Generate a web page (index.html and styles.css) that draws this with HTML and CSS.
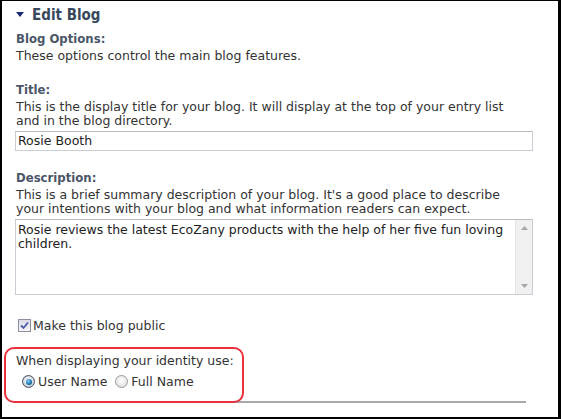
FILE: index.html
```html
<!DOCTYPE html>
<html>
<head>
<meta charset="utf-8">
<link rel="stylesheet" href="styles.css">
</head>
<body>
<div class="frame">
  <h2 class="heading"><span class="tri"></span>Edit Blog</h2>
  <div class="field first">
    <div class="label">Blog Options:</div>
    <div class="help">These options control the main blog features.</div>
  </div>
  <div class="field">
    <div class="label">Title:</div>
    <div class="help">This is the display title for your blog. It will display at the top of your entry list and in the blog directory.</div>
    <div class="input">Rosie Booth</div>
  </div>
  <div class="field">
    <div class="label">Description:</div>
    <div class="help">This is a brief summary description of your blog. It's a good place to describe your intentions with your blog and what information readers can expect.</div>
    <div class="textarea">
      <div class="ta-text">Rosie reviews the latest EcoZany products with the help of her five fun loving children.</div>
      <div class="scroll">
        <svg width="7" height="4" viewBox="0 0 7 4"><path d="M0 4 L3.5 0 L7 4Z" fill="#a8a8a8"/></svg>
        <svg width="7" height="4" viewBox="0 0 7 4"><path d="M0 0 L3.5 4 L7 0Z" fill="#a8a8a8"/></svg>
      </div>
    </div>
  </div>
  <label class="check"><span class="box"><svg width="9" height="9" viewBox="0 0 9 9"><path d="M1 4.5 L3.5 7 L8 1.5" fill="none" stroke="#4a5aa8" stroke-width="1.8"/></svg></span>Make this blog public</label>
  <div class="identity">
    <div class="id-label">When displaying your identity use:</div>
    <div class="radios">
      <span class="radio on"></span><span class="rlabel">User Name</span>
      <span class="radio"></span><span class="rlabel">Full Name</span>
    </div>
  </div>
  <div class="rule"></div>
</div>
</body>
</html>
```
FILE: styles.css
```css
* { box-sizing: border-box; }
html, body { margin: 0; padding: 0; background: #fff; }
.frame {
  width: 561px;
  height: 419px;
  border-style: solid;
  border-color: #000;
  border-width: 1px 3px 2px 2px;
  padding: 1px 0 0 14px;
  font-family: "DejaVu Sans", Verdana, sans-serif;
  font-size: 12.5px;
  color: #333;
  overflow: hidden;
}
.heading {
  margin: 0;
  height: 25px;
  display: flex;
  align-items: center;
  font-family: "DejaVu Sans Condensed", "DejaVu Sans", sans-serif;
  font-size: 15px;
  font-weight: bold;
  color: #37475c;
}
.tri {
  width: 0; height: 0;
  border-left: 4px solid transparent;
  border-right: 4px solid transparent;
  border-top: 5px solid #1b2a72;
  margin: 0 8px 0 0;
}
.field { margin-top: 20px; }
.field.first { margin-top: 5px; }
.label {
  font-family: "DejaVu Sans Condensed", "DejaVu Sans", sans-serif;
  font-weight: bold;
  font-size: 13px;
  color: #4b5668;
  line-height: 14px;
  margin-bottom: 3px;
}
.help { line-height: 14px; width: 505px; }
.input {
  margin: 3px 0 0 -1px;
  width: 518px;
  height: 20px;
  border: 1px solid #c9ced6;
  border-top-color: #b8bcc2;
  padding: 0 2px;
  line-height: 18px;
  color: #222;
}
.textarea {
  margin: 3px 0 0 -1px;
  width: 518px;
  height: 76px;
  border: 1px solid #c9ced6;
  border-top-color: #b8bcc2;
  display: flex;
  color: #222;
}
.ta-text { flex: 1; padding: 3px 10px 0 2px; line-height: 14px; }
.scroll {
  width: 17px;
  background: #f0f0f0;
  border-left: 1px solid #e4e4e4;
  display: flex;
  flex-direction: column;
  justify-content: space-between;
  align-items: center;
  padding: 6px 0 6px;
}
.check {
  display: flex;
  align-items: center;
  margin-top: 23px;
  margin-left: 2px;
  height: 14px;
}
.box {
  width: 13px; height: 13px;
  border: 1px solid #8f8f9f;
  background: linear-gradient(#dcdde8, #f4f4f8);
  display: flex; align-items: center; justify-content: center;
  margin-right: 2px;
}
.identity {
  margin: 15px 0 0 -12px;
  width: 240px;
  height: 56px;
  border: 2px solid #e8313b;
  border-radius: 10px;
  padding: 5px 0 0 10px;
  position: relative;
  z-index: 1;
}
.id-label { line-height: 14px; }
.radios { display: flex; align-items: center; margin-top: 6px; margin-left: 6px; }
.radio {
  width: 13px; height: 13px; border-radius: 50%;
  border: 1px solid #9a9a9a;
  background: radial-gradient(circle at 50% 40%, #fff, #d8d8d8);
  display: inline-block;
  margin-right: 3px;
  position: relative;
}
.radio.on { border-color: #4a5060; background: radial-gradient(circle at 50% 45%, #e8eef4 0 40%, #bfc8d0 70%); }
.radio.on::after {
  content: ""; position: absolute; left: 2.5px; top: 2.5px; width: 6px; height: 6px; border-radius: 50%;
  background: radial-gradient(circle at 40% 35%, #7fd0ff, #0a5f9c 70%, #063a60);
}
.rlabel { margin-right: 8px; }
.rule {
  margin: -2px 0 0 -1px;
  width: 511px;
  height: 2px;
  background: #a8a8a8;
}
```
